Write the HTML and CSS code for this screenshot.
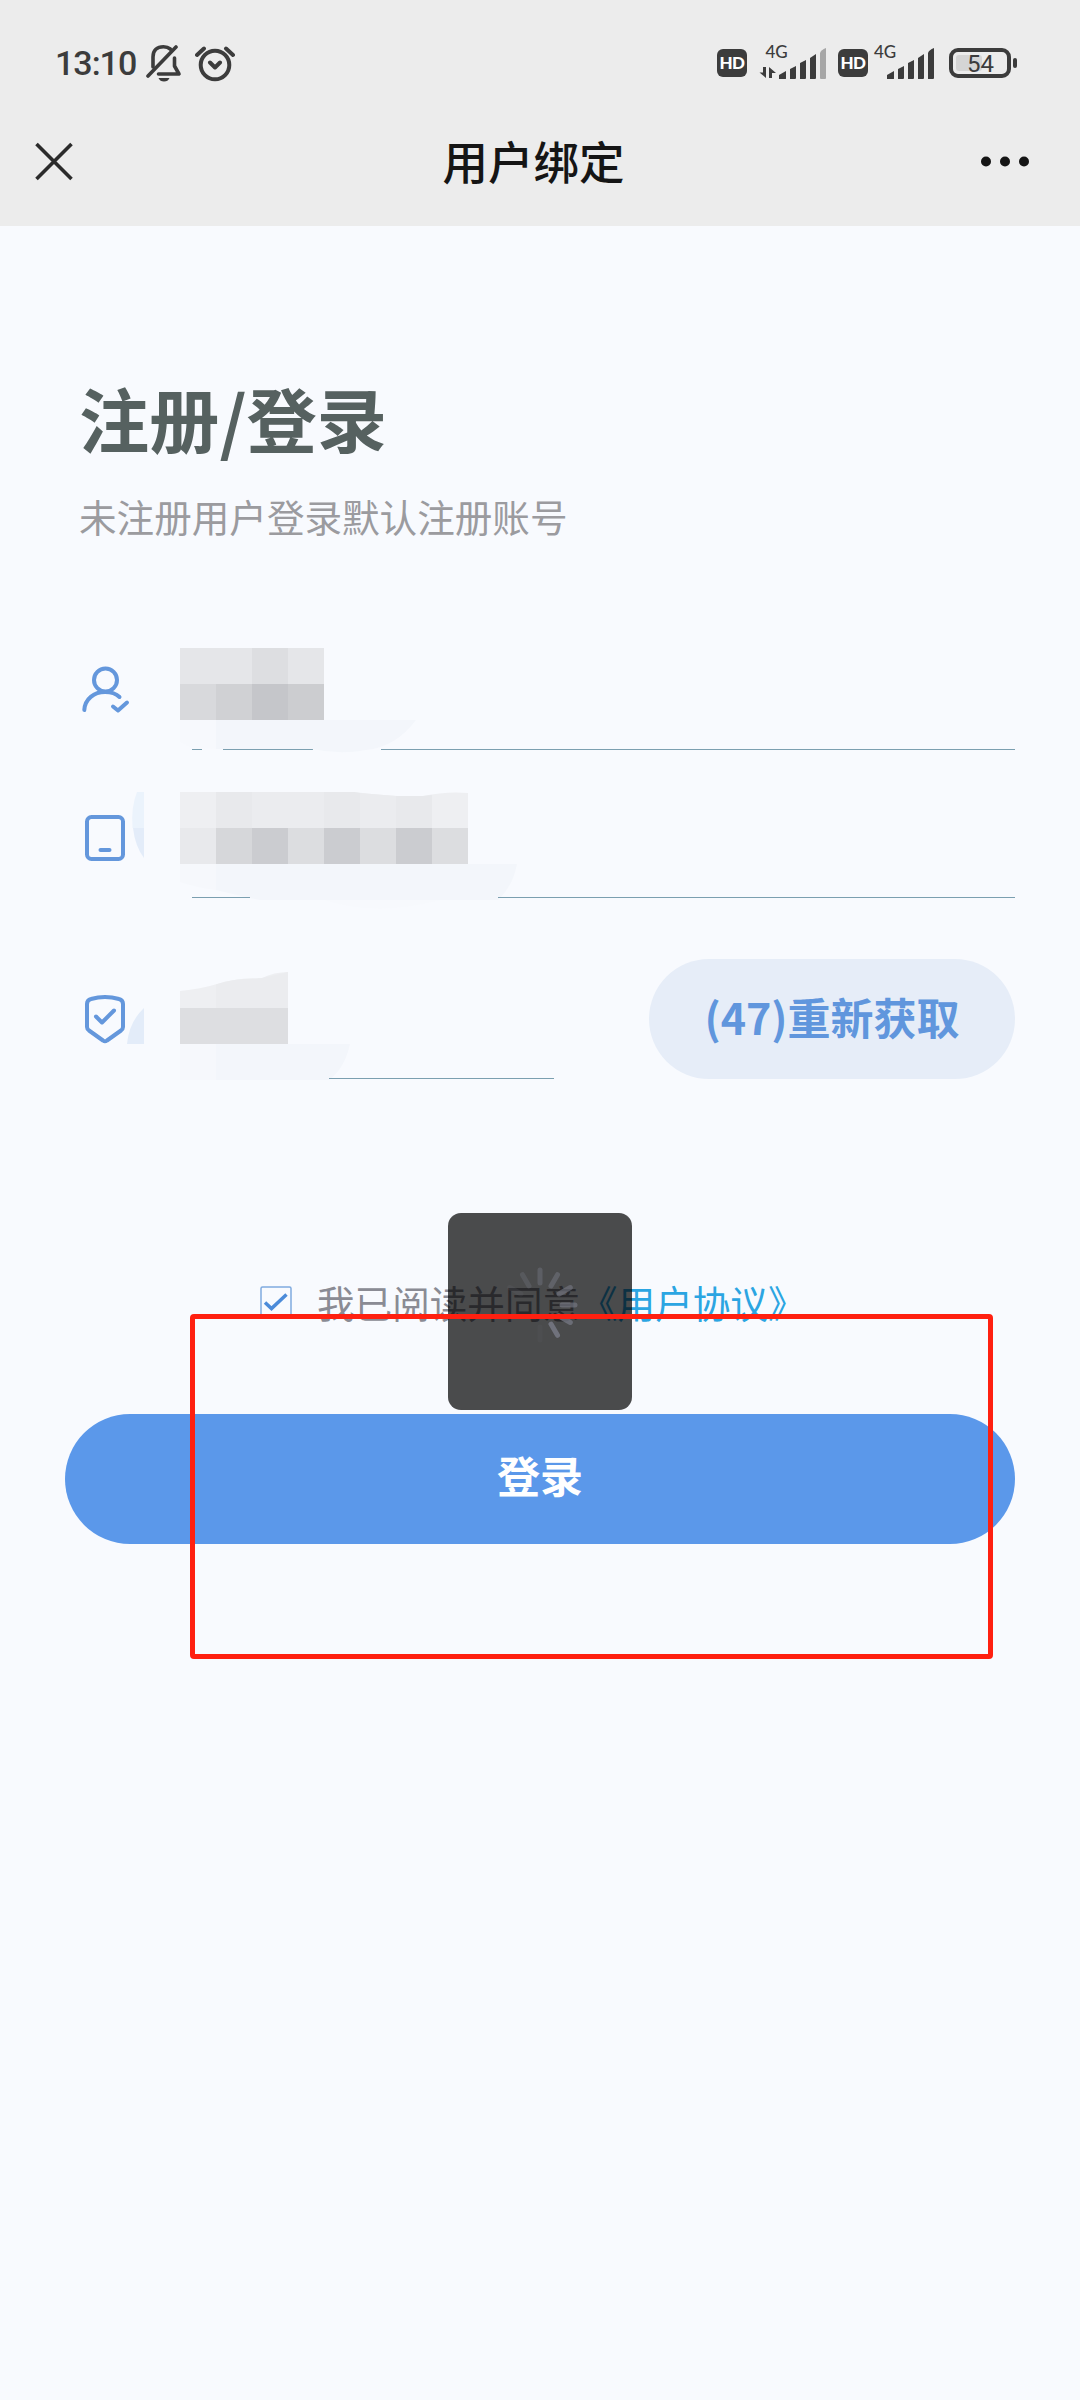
FILE: index.html
```html
<!DOCTYPE html>
<html lang="zh-CN">
<head>
<meta charset="utf-8">
<title>用户绑定</title>
<link rel="stylesheet" href="styles.css">
</head>
<body>
<header class="header">
  <div class="status">
    <div class="status-left">
      <span class="clock">13:10</span>
      <svg class="bell" width="36" height="40" viewBox="0 0 36 40" fill="none" stroke="#3c3c3c" stroke-width="3.6" stroke-linecap="round" stroke-linejoin="round">
        <path d="M7 24V14C7 7 11 3.800 17.500 3.800C20.500 3.800 22.500 4.500 24.300 6"/>
        <path d="M2 33L30 4"/>
        <path d="M28.500 15V23L33 31H12.500"/>
        <path d="M12.500 35H23.500Q22 38.500 18 38.500Q14 38.500 12.500 35Z" fill="#3c3c3c" stroke="none"/>
      </svg>
      <svg class="alarm" width="40" height="40" viewBox="0 0 40 40" fill="none" stroke="#3c3c3c" stroke-width="4" stroke-linecap="round" stroke-linejoin="round">
        <circle cx="20" cy="22" r="14.300"/>
        <path d="M15 19.500L20 24.500L25 19.500M2 12L9 5.500M38 12L31 5.500"/>
      </svg>
    </div>
    <div class="status-right">
      <span class="hd">HD</span>
      <svg class="signal-a" width="72" height="46" viewBox="0 -4 72 46" fill="#3c3c3c">
        <text class="net" x="8.500" y="14">4G</text>
        <path d="M9 23V34L2.500 28.500H6V23ZM12 34V23L19 29H15V34Z"/>
        <path d="M22 35V31L29 27V34.500Q29 35 28 35ZM33 35V25L39 22V34Q39 35 38 35ZM43 35V19L49 16V34Q49 35 48 35ZM53 35V14L59 10V34Q59 35 58 35Z"/>
        <path d="M63 34V9Q64 6 69 4V34Q69 35 68 35H64Q63 35 63 34Z" fill="#a6a6a6"/>
      </svg>
      <span class="hd">HD</span>
      <svg class="signal-b" width="64" height="46" viewBox="0 -4 64 46" fill="#3c3c3c">
        <text class="net" x="2" y="14">4G</text>
        <path d="M15 35V31L22 27V34.500Q22 35 21 35ZM26 35V25L32 22V34Q32 35 31 35ZM36 35V19L42 16V34Q42 35 41 35ZM46 35V14L52 10V34Q52 35 51 35ZM56 35V9Q57 6 62 4V34Q62 35 61 35Z"/>
      </svg>
      <svg class="battery" width="70" height="32" viewBox="0 0 70 32">
        <rect x="7" y="8" width="26" height="16" rx="3" fill="#d5d5d5"/>
        <rect x="2" y="3" width="58" height="26" rx="7" fill="none" stroke="#3c3c3c" stroke-width="4"/>
        <rect x="64" y="11" width="4" height="10" rx="2" fill="#3c3c3c"/>
        <text class="level" x="31.500" y="24.500" text-anchor="middle">54</text>
      </svg>
    </div>
  </div>
  <nav class="nav">
    <svg width="40" height="40" viewBox="0 0 40 40" stroke="#2b2b2b" stroke-width="3.600"><path d="M2.500 2L37.500 37M37.500 2L2.500 37"/></svg>
    <h1 class="nav-title">用户绑定</h1>
    <svg width="50" height="12" viewBox="0 0 50 12" fill="#151515"><circle cx="6" cy="5.500" r="5"/><circle cx="25" cy="5.500" r="5"/><circle cx="44" cy="5.500" r="5"/></svg>
  </nav>
</header>
<main class="page">
  <h2 class="heading">注册/登录</h2>
  <p class="sub">未注册用户登录默认注册账号</p>
  <div class="form">
    <div class="row">
      <svg width="100" height="120" viewBox="0 0 100 120" fill="none" stroke="#6497dc" stroke-width="4" stroke-linecap="round" stroke-linejoin="round">
        <circle cx="25.500" cy="40" r="11.500"/>
        <path d="M4.300 70C5 59 14 52 25 52C31 52 36 53.500 39.500 57M33 66.500L38 70.500L47 62.500"/>
      </svg>
      <svg width="835" height="120" viewBox="0 0 835 120">
        <path d="M12 109.500H22M43 109.500H133M201 109.500H835" class="line"/>
        <path d="M0 80H36V109L14 108Q6 106 0 101Z" fill="#f7f9fd"/>
        <path d="M36 80H236Q216 107 186 110Q160 115 132 109H36Z" fill="#f3f6fb"/>
        <path d="M0 8H144V44H0Z" fill="#e5e6e9"/><path d="M72 8H108V44H72Z" fill="#dddee1"/>
        <path d="M0 44H36V80H0Z" fill="#d8d9dc"/><path d="M36 44H72V80H36Z" fill="#d0d1d4"/><path d="M72 44H108V80H72Z" fill="#c5c6ca"/><path d="M108 44H144V80H108Z" fill="#cccdd0"/>
      </svg>
    </div>
    <div class="row row-phone">
      <svg width="100" height="130" viewBox="0 0 100 130" fill="none" stroke="#6497dc" stroke-width="4" stroke-linecap="round" stroke-linejoin="round">
        <path d="M57 12H64V48H52.500Q51 27 57 12Z" fill="#ebf3fc" stroke="none"/>
        <path d="M53 48H64V78Q55 66 53 48Z" fill="#e3ecf9" stroke="none"/>
        <rect x="7" y="37" width="36" height="42" rx="4.500"/><path d="M20.500 70H29.500"/>
      </svg>
      <svg width="835" height="130" viewBox="0 0 835 130">
        <path d="M36 84H337Q333 106 318 120H80Q56 115 36 110Z" fill="#f3f6fb"/>
        <path d="M0 84H36V110Q14 107 0 102Z" fill="#f6f8fc"/>
        <path d="M144 120Q198 137 260 120Z" fill="#f7f9fd"/>
        <path d="M12 117.500H70M318 117.500H835" class="line"/>
        <path d="M0 12H174Q210 17 243 16Q267 11 288 13V48H0Z" fill="#eeeff2"/>
        <path d="M36 12H72V48H36ZM144 12H174L180 13V48H144ZM216 16H243L252 15V48H216Z" fill="#e8e9ec"/>
        <path d="M72 12H144V48H72ZM180 13L216 16V48H180Z" fill="#ebecef"/>
        <path d="M0 48H36V84H0Z" fill="#e8e9ec"/><path d="M36 48H72V84H36Z" fill="#d6d7da"/><path d="M72 48H108V84H72ZM144 48H180V84H144ZM216 48H252V84H216Z" fill="#cbccd0"/><path d="M108 48H144V84H108ZM180 48H216V84H180ZM252 48H288V84H252Z" fill="#dcdde0"/>
      </svg>
    </div>
    <div class="row row-code">
      <svg width="100" height="140" viewBox="0 0 100 140" fill="none" stroke="#6497dc" stroke-width="4" stroke-linecap="round" stroke-linejoin="round">
        <path d="M64 58V94H47Q49 72 64 58Z" fill="#e3ecf9" stroke="none"/>
        <path d="M7 54Q7 50 11 49Q25 45 39 49Q43 50 43 54V77Q43 79 41 80.500L27 90.500Q25 92 23 90.500L9 80.500Q7 79 7 77Z"/>
        <path d="M16 66.500L22 72.500L34 60.500"/>
      </svg>
      <svg width="376" height="140" viewBox="0 0 376 140">
        <path d="M36 94H170Q165 118 149 130H36Z" fill="#f3f6fb"/>
        <path d="M0 94H36V130H0Z" fill="#f6f8fc"/>
        <path d="M149 128.500H374" class="line"/>
        <path d="M0 41Q21 39 37 34Q55 28 76 28.500L82 28Q94 22 108 22V58H0Z" fill="#eeeff2"/>
        <path d="M36 34.500Q55 28 76 28.500L82 28L108 22V58H36Z" fill="#ebecef"/>
        <path d="M0 58H108V94H0Z" fill="#dddee1"/>
      </svg>
      <button class="resend">(47)重新获取</button>
    </div>
  </div>
  <div class="agree">
    <svg width="32" height="32" viewBox="0 0 32 32" fill="none"><rect x="1" y="1" width="30" height="30" rx="1.500" stroke="#7faadf" stroke-width="1.500"/><path d="M5 16.500L11.500 22.500L26.500 8.500" stroke="#4c8bd9" stroke-width="3.500"/></svg>
    <span>我已阅读并同意<a class="terms">《用户协议》</a></span>
  </div>
  <button class="login">登录</button>
</main>
<div class="loading">
  <svg width="80" height="80" viewBox="-40 -40 80 80" stroke="#777985" stroke-width="5" stroke-linecap="round">
    <path d="M0 -35V-22" opacity=".42"/><path d="M0 -35V-22" transform="rotate(30)" opacity=".5"/><path d="M0 -35V-22" transform="rotate(60)" opacity=".6"/><path d="M0 -35V-22" transform="rotate(90)" opacity=".65"/><path d="M0 -35V-22" transform="rotate(120)" opacity=".75"/><path d="M0 -35V-22" transform="rotate(150)" opacity=".85"/><path d="M0 -35V-22" transform="rotate(180)" opacity=".08"/><path d="M0 -35V-22" transform="rotate(300)" opacity=".12"/><path d="M0 -35V-22" transform="rotate(330)" opacity=".3"/>
  </svg>
</div>
<div class="marker"></div>
</body>
</html>
```
FILE: styles.css
```css
* { box-sizing: border-box; }
body {
  margin: 0;
  width: 1080px;
  height: 2400px;
  position: relative;
  overflow: hidden;
  background: #f8fafe;
  font-family: "Noto Sans CJK SC", sans-serif;
}
svg { display: block; flex: none; }
h1, h2, p { margin: 0; font-weight: 400; }
button { border: 0; padding: 0; font: inherit; }

.header { height: 226px; background: #ececec; }
.status {
  height: 97px;
  padding: 29px 61px 0 55px;
  display: flex;
  align-items: center;
  justify-content: space-between;
}
.status-left, .status-right { display: flex; align-items: center; }
.clock { width: 91px; font: 500 34px/40px Roboto, sans-serif; letter-spacing: -1px; color: #3c3c3c; }
.alarm { margin-left: 13px; }
.hd {
  width: 30px;
  height: 28px;
  border-radius: 6px;
  background: #3c3c3c;
  color: #fff;
  font: 900 17px/28px Lato, sans-serif;
  letter-spacing: -0.5px;
  text-align: center;
}
.signal-a { margin: 0 9px 0 10px; }
.signal-b { margin: 0 13px 0 4px; }
.net { font: 500 17px Lato, sans-serif; }
.level { font: 400 24px Roboto, sans-serif; fill: #3c3c3c; }

.nav {
  height: 129px;
  padding: 0 50px 0 34px;
  display: grid;
  grid-template-columns: 40px 1fr 50px;
  align-items: center;
}
.nav-title {
  padding: 0 0 3px 13px;
  font-weight: 500;
  font-size: 45.500px;
  line-height: 60px;
  text-align: center;
  color: #151515;
}

.page { padding: 156px 65px 0; }
.heading { padding-left: 14px; font-weight: 700; font-size: 70.200px; line-height: 72px; color: #566160; }
.sub { margin-top: 42px; padding-left: 14px; font-size: 37.600px; line-height: 40px; color: #9b9b9f; }
.form { margin-top: 104px; padding-left: 15px; }
.row { display: flex; }
.row-phone { margin-top: 20px; }
.row-code { margin-top: 40px; align-items: center; }
.line { stroke: #7b9fb0; stroke-width: 1; }
.resend {
  width: 366px;
  height: 120px;
  margin: 0 0 3px 93px;
  padding-bottom: 6px;
  flex: none;
  border-radius: 60px;
  background: #e6edf8;
  color: #6096dd;
  font-weight: 700;
  font-size: 43px;
}
.agree {
  margin-top: 190px;
  padding-left: 195px;
  display: flex;
  align-items: center;
  gap: 25px;
  height: 44px;
  font-size: 37.600px;
  line-height: 44px;
  color: #8a8b94;
}
.terms { color: #2ba5e2; }
.login {
  display: block;
  width: 950px;
  height: 130px;
  margin-top: 90px;
  padding-bottom: 10px;
  border-radius: 65px;
  background: #5b98ea;
  color: #fff;
  font-weight: 700;
  font-size: 43px;
}
.loading {
  position: absolute;
  left: 448px;
  top: 1213px;
  width: 184px;
  height: 197px;
  padding-top: 52px;
  border-radius: 13px;
  background: rgba(0, 0, 0, 0.7);
  display: flex;
  justify-content: center;
}
.marker {
  position: absolute;
  left: 190px;
  top: 1314px;
  width: 803px;
  height: 345px;
  border: 5px solid #ff2010;
  border-radius: 4px;
}
```
